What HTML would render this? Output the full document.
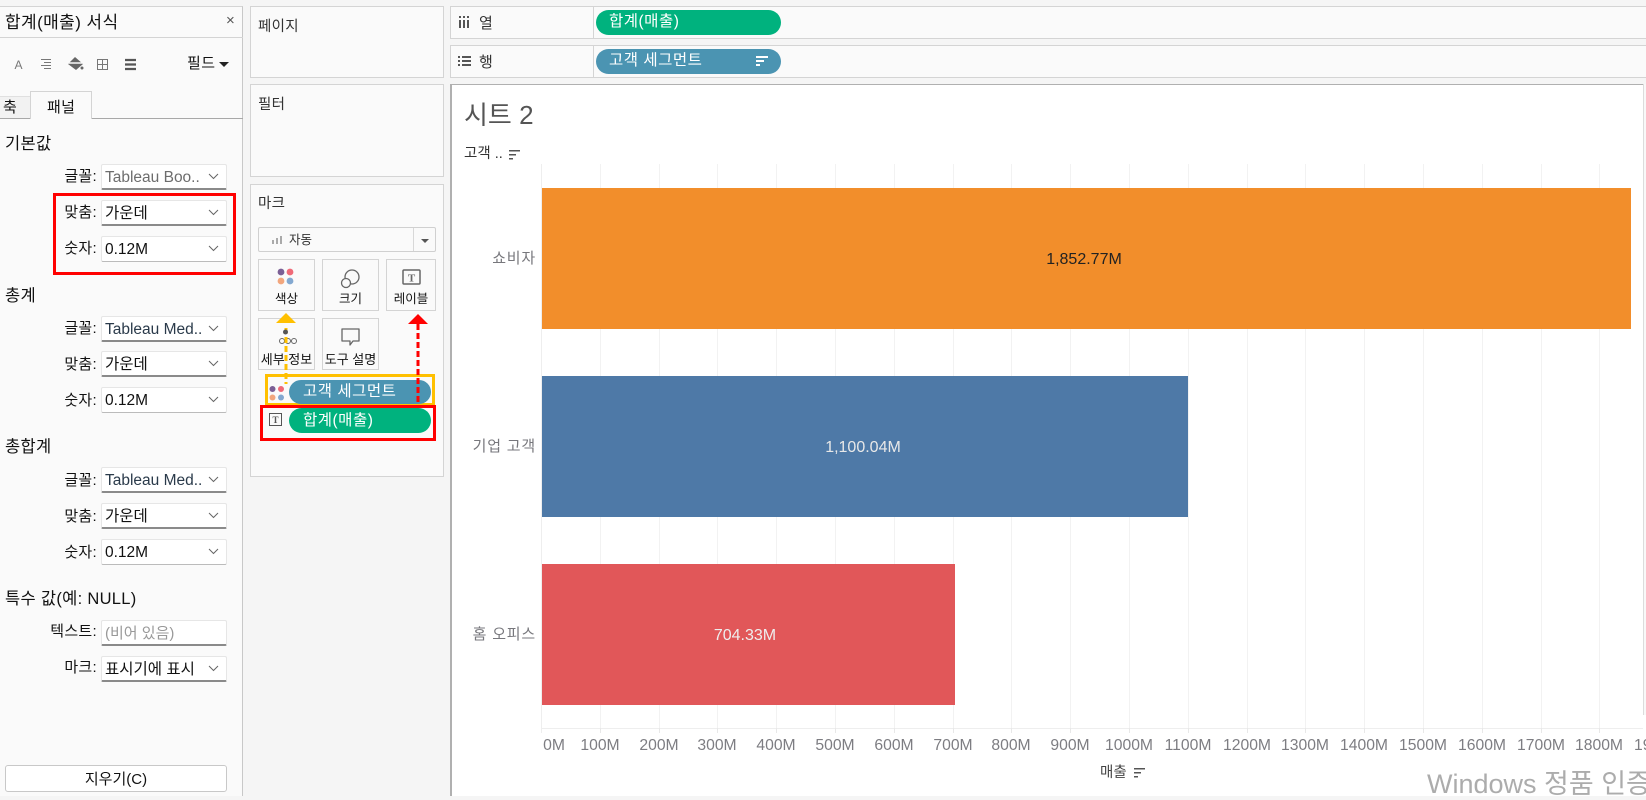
<!DOCTYPE html>
<html lang="ko"><head><meta charset="utf-8"><style>
html,body{margin:0;padding:0}
body{width:1646px;height:796px;overflow:hidden;background:#f5f5f5;position:relative;font-family:"Liberation Sans","Noto Sans CJK KR",sans-serif;color:#111}
.a{position:absolute}
.t{position:absolute;white-space:nowrap;line-height:20px;font-size:15px}
.h{font-size:16.500px;letter-spacing:.3px;color:#111;left:5px}
.l{font-size:15px;right:1549px;text-align:right;color:#111;letter-spacing:.3px}
.s{position:absolute;left:101px;width:124px;height:23px;background:#fff;border:1px solid #e6e6e6;border-bottom:2px solid #8a8a8a;border-radius:2px;box-sizing:content-box}
.s span{position:absolute;left:3px;top:2px;font-size:15.500px;line-height:21px;white-space:nowrap;color:#111}
.s svg{position:absolute;right:7px;top:8px}
.b{position:absolute;border:1px solid #d4d4d4;background:#fafafa;box-sizing:border-box}
.c{position:absolute;width:57px;height:52px;border:1px solid #d4d4d4;box-sizing:border-box;background:#fafafa}
.c span{position:absolute;left:-3px;right:-3px;text-align:center;top:31px;font-size:12.500px;line-height:16px;white-space:nowrap;color:#111}
.p{position:absolute;border-radius:13px;color:#fff;font-size:15.500px;letter-spacing:.5px;line-height:24px;white-space:nowrap}
.x{position:absolute;top:736px;width:80px;text-align:center;font-size:15.700px;line-height:20px;color:#7d7d82}
.g{position:absolute;top:164px;height:564px;width:1px;background:#f2f2f2}
.k{position:absolute;top:728px;height:5px;width:1px;background:#e8e8e8}
</style></head><body>
<!-- left panel -->
<div class="a" style="left:0;top:6px;width:243px;height:790px;background:#fafafa;border-top:1px solid #d4d4d4;border-right:1px solid #c8c8c8;box-sizing:border-box"></div>
<div class="a" style="left:0;top:37px;width:243px;height:1px;background:#d4d4d4"></div>
<div class="t" style="left:5px;top:13px;font-size:17px;letter-spacing:.4px">합계(매출) 서식</div>
<div class="t" style="left:226px;top:11px;font-size:15px;color:#555">×</div>
<svg class="a" style="left:10px;top:52px" width="135" height="24" viewBox="0 0 135 24">
<text x="4.500" y="17" font-size="12" font-family="Liberation Sans" fill="#777">A</text>
<path d="M31 7.500h10M34 10.500h7M31 13.500h10M34 16.500h7" stroke="#777" fill="none"/>
<path d="M58 12l7-7 8 7-7 6z" fill="#666"/><path d="M57 11h16" stroke="#fafafa" stroke-width="1.500"/><circle cx="72" cy="16" r="1.500" fill="#666"/>
<path d="M87.500 7.500h10v10h-10zM92.500 7.500v10M87.500 12.500h10" fill="none" stroke="#777"/>
<path d="M115 8h11M115 12.500h11M115 17h11" stroke="#555" stroke-width="2.200" fill="none"/>
</svg>
<div class="t" style="left:187px;top:54px;font-size:15px;letter-spacing:.5px">필드</div>
<div class="a" style="left:219px;top:62px;border:5px solid transparent;border-top:5px solid #222;border-bottom:0"></div>
<div class="a" style="left:0;top:118px;width:243px;height:1px;background:#a8a8a8"></div>
<div class="a" style="left:0;top:96px;width:30px;height:22px;background:#f2f2f2;border-top:1px solid #e0e0e0;box-sizing:border-box"></div>
<div class="a" style="left:30px;top:91px;width:62px;height:28px;background:#fafafa;border:1px solid #d4d4d4;border-bottom:0;box-sizing:border-box"></div>
<div class="t" style="left:3px;top:98px;font-size:15px">축</div>
<div class="t" style="left:47px;top:98px;font-size:15px;letter-spacing:.3px">패널</div>

<div class="t h" style="top:134px">기본값</div>
<div class="t l" style="top:167px">글꼴:</div>
<div class="s" style="top:164px"><span style="color:#6d6d6d">Tableau Boo..</span><svg width="11" height="7"><path d="M1 1l4.500 4.500L10 1" fill="none" stroke="#666"/></svg></div>
<div class="t l" style="top:203px">맞춤:</div>
<div class="s" style="top:200px"><span>가운데</span><svg width="11" height="7"><path d="M1 1l4.500 4.500L10 1" fill="none" stroke="#666"/></svg></div>
<div class="t l" style="top:239px">숫자:</div>
<div class="s" style="top:236px;border-bottom:1px solid #bbb;height:24px"><span>0.12M</span><svg width="11" height="7"><path d="M1 1l4.500 4.500L10 1" fill="none" stroke="#666"/></svg></div>
<div class="a" style="left:53px;top:193px;width:183px;height:82px;border:3px solid #f00;box-sizing:border-box"></div>

<div class="t h" style="top:286px">총계</div>
<div class="t l" style="top:319px">글꼴:</div>
<div class="s" style="top:316px"><span style="color:#2a3a4a">Tableau Med..</span><svg width="11" height="7"><path d="M1 1l4.500 4.500L10 1" fill="none" stroke="#666"/></svg></div>
<div class="t l" style="top:355px">맞춤:</div>
<div class="s" style="top:351px"><span>가운데</span><svg width="11" height="7"><path d="M1 1l4.500 4.500L10 1" fill="none" stroke="#666"/></svg></div>
<div class="t l" style="top:391px">숫자:</div>
<div class="s" style="top:387px;border-bottom:1px solid #bbb;height:24px"><span>0.12M</span><svg width="11" height="7"><path d="M1 1l4.500 4.500L10 1" fill="none" stroke="#666"/></svg></div>

<div class="t h" style="top:437px">총합계</div>
<div class="t l" style="top:471px">글꼴:</div>
<div class="s" style="top:467px"><span style="color:#2a3a4a">Tableau Med..</span><svg width="11" height="7"><path d="M1 1l4.500 4.500L10 1" fill="none" stroke="#666"/></svg></div>
<div class="t l" style="top:507px">맞춤:</div>
<div class="s" style="top:503px"><span>가운데</span><svg width="11" height="7"><path d="M1 1l4.500 4.500L10 1" fill="none" stroke="#666"/></svg></div>
<div class="t l" style="top:543px">숫자:</div>
<div class="s" style="top:539px;border-bottom:1px solid #bbb;height:24px"><span>0.12M</span><svg width="11" height="7"><path d="M1 1l4.500 4.500L10 1" fill="none" stroke="#666"/></svg></div>

<div class="t h" style="top:589px">특수 값(예: NULL)</div>
<div class="t l" style="top:622px">텍스트:</div>
<div class="s" style="top:620px"><span style="color:#999;font-size:15px">(비어 있음)</span></div>
<div class="t l" style="top:658px">마크:</div>
<div class="s" style="top:656px"><span>표시기에 표시</span><svg width="11" height="7"><path d="M1 1l4.500 4.500L10 1" fill="none" stroke="#666"/></svg></div>
<div class="a" style="left:5px;top:765px;width:222px;height:27px;background:#fff;border:1px solid #c8c8c8;border-radius:3px;box-sizing:border-box;text-align:center;font-size:15px;line-height:28px">지우기(C)</div>

<!-- middle -->
<div class="b" style="left:250px;top:6px;width:194px;height:72px"></div>
<div class="t" style="left:258px;top:17px;font-size:14.500px;letter-spacing:.3px;color:#333">페이지</div>
<div class="b" style="left:250px;top:84px;width:194px;height:93px"></div>
<div class="t" style="left:258px;top:95px;font-size:14.500px;letter-spacing:.3px;color:#333">필터</div>
<div class="b" style="left:250px;top:184px;width:194px;height:293px"></div>
<div class="t" style="left:258px;top:194px;font-size:14.500px;letter-spacing:.3px;color:#333">마크</div>
<div class="a" style="left:258px;top:227px;width:178px;height:25px;background:#fafafa;border:1px solid #d0d0d0;border-radius:2px;box-sizing:border-box"></div>
<div class="a" style="left:413px;top:228px;width:1px;height:23px;background:#d8d8d8"></div>
<div class="a" style="left:421px;top:239px;border:4px solid transparent;border-top:4px solid #555;border-bottom:0"></div>
<svg class="a" style="left:271px;top:235px" width="12" height="10"><path d="M1 5h2v4H1zM5 3h2v6H5zM9 1h2v8H9z" fill="#aaa"/></svg>
<div class="t" style="left:289px;top:230px;font-size:12.500px;color:#333">자동</div>

<div class="c" style="left:258px;top:259px"><svg class="a" style="left:17px;top:7px" width="22" height="22"><circle cx="5" cy="5" r="3.400" fill="#7b5f95"/><circle cx="14" cy="5" r="3.400" fill="#ef6a78"/><circle cx="5" cy="14" r="3.400" fill="#f2a67d"/><circle cx="14" cy="14" r="3.400" fill="#83a8d0"/></svg><span>색상</span></div>
<div class="c" style="left:322px;top:259px"><svg class="a" style="left:17px;top:8px" width="22" height="22" fill="none" stroke="#666" stroke-width="1.300"><circle cx="12" cy="9" r="7"/><circle cx="6" cy="15" r="4.500" fill="#fafafa"/></svg><span>크기</span></div>
<div class="c" style="left:386px;top:259px;width:50px"><svg class="a" style="left:15px;top:9px" width="20" height="18"><rect x="1" y="1" width="17" height="14" rx="1" fill="none" stroke="#666" stroke-width="1.500"/><text x="9.500" y="12.500" font-size="11" font-weight="bold" font-family="Liberation Serif" fill="#666" text-anchor="middle">T</text></svg><span>레이블</span></div>
<div class="c" style="left:258px;top:318px"><svg class="a" style="left:17px;top:8px" width="24" height="22" fill="none" stroke="#666"><circle cx="6" cy="14" r="2.500"/><circle cx="12" cy="14" r="2.500"/><circle cx="18" cy="14" r="2.500"/></svg><span style="left:-3px;right:-3px;top:33px;font-size:13px">세부 정보</span></div>
<div class="c" style="left:322px;top:318px"><svg class="a" style="left:17px;top:8px" width="22" height="22" fill="none" stroke="#666" stroke-width="1.300"><path d="M2 2h17v12h-6l-3 4v-4H2z" stroke-linejoin="round"/></svg><span style="top:33px;font-size:13px">도구 설명</span></div>

<!-- pills -->
<div class="a" style="left:265px;top:374px;width:170px;height:32px;border:3px solid #ffc000;box-sizing:border-box"></div>
<div class="a" style="left:260px;top:405px;width:176px;height:36px;border:3px solid #f00;box-sizing:border-box"></div>
<svg class="a" style="left:268px;top:385px" width="18" height="18"><circle cx="4.500" cy="4" r="3" fill="#7b5f95"/><circle cx="13" cy="4" r="3" fill="#ef6a78"/><circle cx="4.500" cy="12.500" r="3" fill="#f2a67d"/><circle cx="13" cy="12.500" r="3" fill="#83a8d0"/></svg>
<svg class="a" style="left:269px;top:413px" width="14" height="14"><rect x="0.500" y="0.500" width="12" height="12" fill="none" stroke="#555"/><text x="6.500" y="10" font-size="9" font-family="Liberation Serif" font-weight="bold" fill="#555" text-anchor="middle">T</text></svg>
<div class="p" style="left:289px;top:380px;width:142px;height:24px;background:#4b94b2;padding-left:14px;box-sizing:border-box">고객 세그먼트</div>
<div class="p" style="left:289px;top:408px;width:142px;height:25px;background:#00b27e;padding-left:14px;box-sizing:border-box;line-height:25px">합계(매출)</div>
<svg class="a" style="left:270px;top:310px" width="170" height="100" fill="none">
<path d="M16 18v56" stroke="#ffc000" stroke-width="3" stroke-dasharray="6 3"/>
<path d="M6 13L16 3l10 10z" fill="#ffc000" stroke="none"/>
<circle cx="15.500" cy="22" r="2.500" fill="#555"/>
<path d="M148 14v80" stroke="#f00" stroke-width="3" stroke-dasharray="6 3"/>
<path d="M138 14l10-10 10 10z" fill="#f00" stroke="none"/>
</svg>

<!-- shelves -->
<div class="b" style="left:450px;top:6px;width:1196px;height:33px;border-right:0"></div>
<div class="b" style="left:450px;top:45px;width:1196px;height:33px;border-right:0"></div>
<div class="a" style="left:593px;top:6px;width:1px;height:33px;background:#d4d4d4"></div>
<div class="a" style="left:593px;top:45px;width:1px;height:33px;background:#d4d4d4"></div>
<svg class="a" style="left:458px;top:16px" width="12" height="13" fill="#555"><path d="M1 0h2v2H1zM5 0h2v2H5zM9 0h2v2H9zM1 4h2v8H1zM5 4h2v8H5zM9 4h2v8H9z"/></svg>
<div class="t" style="left:479px;top:14px;font-size:15px;color:#333">열</div>
<svg class="a" style="left:458px;top:55px" width="13" height="12" fill="#555"><path d="M0 1h2v2H0zM4 1h9v2H4zM0 5h2v2H0zM4 5h9v2H4zM0 9h2v2H0zM4 9h9v2H4z"/></svg>
<div class="t" style="left:479px;top:53px;font-size:15px;color:#333">행</div>
<div class="p" style="left:596px;top:10px;width:185px;height:25px;background:#00b27e;padding-left:13px;box-sizing:border-box;line-height:24px">합계(매출)</div>
<div class="p" style="left:596px;top:49px;width:185px;height:25px;background:#4b94b2;padding-left:13px;box-sizing:border-box;line-height:23px">고객 세그먼트</div>
<svg class="a" style="left:756px;top:55px" width="14" height="12" fill="#fff"><path d="M0 1h12v2H0zM0 5h8v2H0zM0 9h4v2H0z"/></svg>

<!-- chart -->
<div class="a" style="left:450px;top:84px;width:1196px;height:712px;background:#fff;border-left:2px solid #b0b0b0;border-top:1px solid #b0b0b0;box-sizing:border-box"></div>
<div class="a" style="left:1643px;top:84px;width:3px;height:631px;background:#f8f8f8;border-left:1px solid #dcdcdc;box-sizing:border-box"></div>
<div class="t" style="left:464px;top:100px;font-size:26px;line-height:30px;color:#555">시트 2</div>
<div class="t" style="left:464px;top:144px;font-size:14.500px;color:#333">고객 ..</div>
<svg class="a" style="left:509px;top:150px" width="12" height="10" fill="#555"><path d="M0 0h11v1.500H0zM0 4h7v1.500H0zM0 8h4v1.500H0z"/></svg>

<div class="g" style="left:600px"></div><div class="g" style="left:659px"></div><div class="g" style="left:717px"></div><div class="g" style="left:776px"></div><div class="g" style="left:835px"></div><div class="g" style="left:894px"></div><div class="g" style="left:953px"></div><div class="g" style="left:1011px"></div><div class="g" style="left:1070px"></div><div class="g" style="left:1129px"></div><div class="g" style="left:1188px"></div><div class="g" style="left:1247px"></div><div class="g" style="left:1305px"></div><div class="g" style="left:1364px"></div><div class="g" style="left:1423px"></div><div class="g" style="left:1482px"></div><div class="g" style="left:1541px"></div><div class="g" style="left:1599px"></div>
<div class="a" style="left:541px;top:164px;width:1px;height:569px;background:#eee"></div>
<div class="a" style="left:541px;top:728px;width:1102px;height:1px;background:#eee"></div>
<div class="k" style="left:600px"></div><div class="k" style="left:659px"></div><div class="k" style="left:717px"></div><div class="k" style="left:776px"></div><div class="k" style="left:835px"></div><div class="k" style="left:894px"></div><div class="k" style="left:953px"></div><div class="k" style="left:1011px"></div><div class="k" style="left:1070px"></div><div class="k" style="left:1129px"></div><div class="k" style="left:1188px"></div><div class="k" style="left:1247px"></div><div class="k" style="left:1305px"></div><div class="k" style="left:1364px"></div><div class="k" style="left:1423px"></div><div class="k" style="left:1482px"></div><div class="k" style="left:1541px"></div><div class="k" style="left:1599px"></div>

<div class="a" style="left:542px;top:188px;width:1089px;height:141px;background:#f28e2b"></div>
<div class="a" style="left:542px;top:376px;width:646px;height:141px;background:#4e79a7"></div>
<div class="a" style="left:542px;top:564px;width:413px;height:141px;background:#e15759"></div>
<div class="t" style="left:1044px;top:250px;color:#222;width:80px;text-align:center;font-size:16px">1,852.77M</div>
<div class="t" style="left:823px;top:438px;color:#e8e8e8;width:80px;text-align:center;font-size:16px">1,100.04M</div>
<div class="t" style="left:705px;top:626px;color:#eee;width:80px;text-align:center;font-size:16px">704.33M</div>
<div class="t" style="right:1110px;top:249px;font-size:15px;letter-spacing:.8px;color:#77777c">쇼비자</div>
<div class="t" style="right:1110px;top:437px;font-size:15px;letter-spacing:.8px;color:#77777c">기업 고객</div>
<div class="t" style="right:1110px;top:625px;font-size:15px;letter-spacing:.8px;color:#77777c">홈 오피스</div>

<div class="x" style="left:514px">0M</div><div class="x" style="left:560px">100M</div><div class="x" style="left:619px">200M</div><div class="x" style="left:677px">300M</div><div class="x" style="left:736px">400M</div><div class="x" style="left:795px">500M</div><div class="x" style="left:854px">600M</div><div class="x" style="left:913px">700M</div><div class="x" style="left:971px">800M</div><div class="x" style="left:1030px">900M</div><div class="x" style="left:1089px">1000M</div><div class="x" style="left:1148px">1100M</div><div class="x" style="left:1207px">1200M</div><div class="x" style="left:1265px">1300M</div><div class="x" style="left:1324px">1400M</div><div class="x" style="left:1383px">1500M</div><div class="x" style="left:1442px">1600M</div><div class="x" style="left:1501px">1700M</div><div class="x" style="left:1559px">1800M</div>
<div class="t" style="left:1634px;top:736px;color:#7d7d82;font-size:15.700px">19</div>
<div class="t" style="left:1100px;top:763px;font-size:14.500px;color:#444">매출</div>
<svg class="a" style="left:1134px;top:768px" width="12" height="10" fill="#555"><path d="M0 0h11v1.500H0zM0 4h7v1.500H0zM0 8h4v1.500H0z"/></svg>
<div class="t" style="left:1427px;top:768px;font-size:27px;line-height:32px;color:#acacac">Windows 정품 인증</div>
</body></html>
